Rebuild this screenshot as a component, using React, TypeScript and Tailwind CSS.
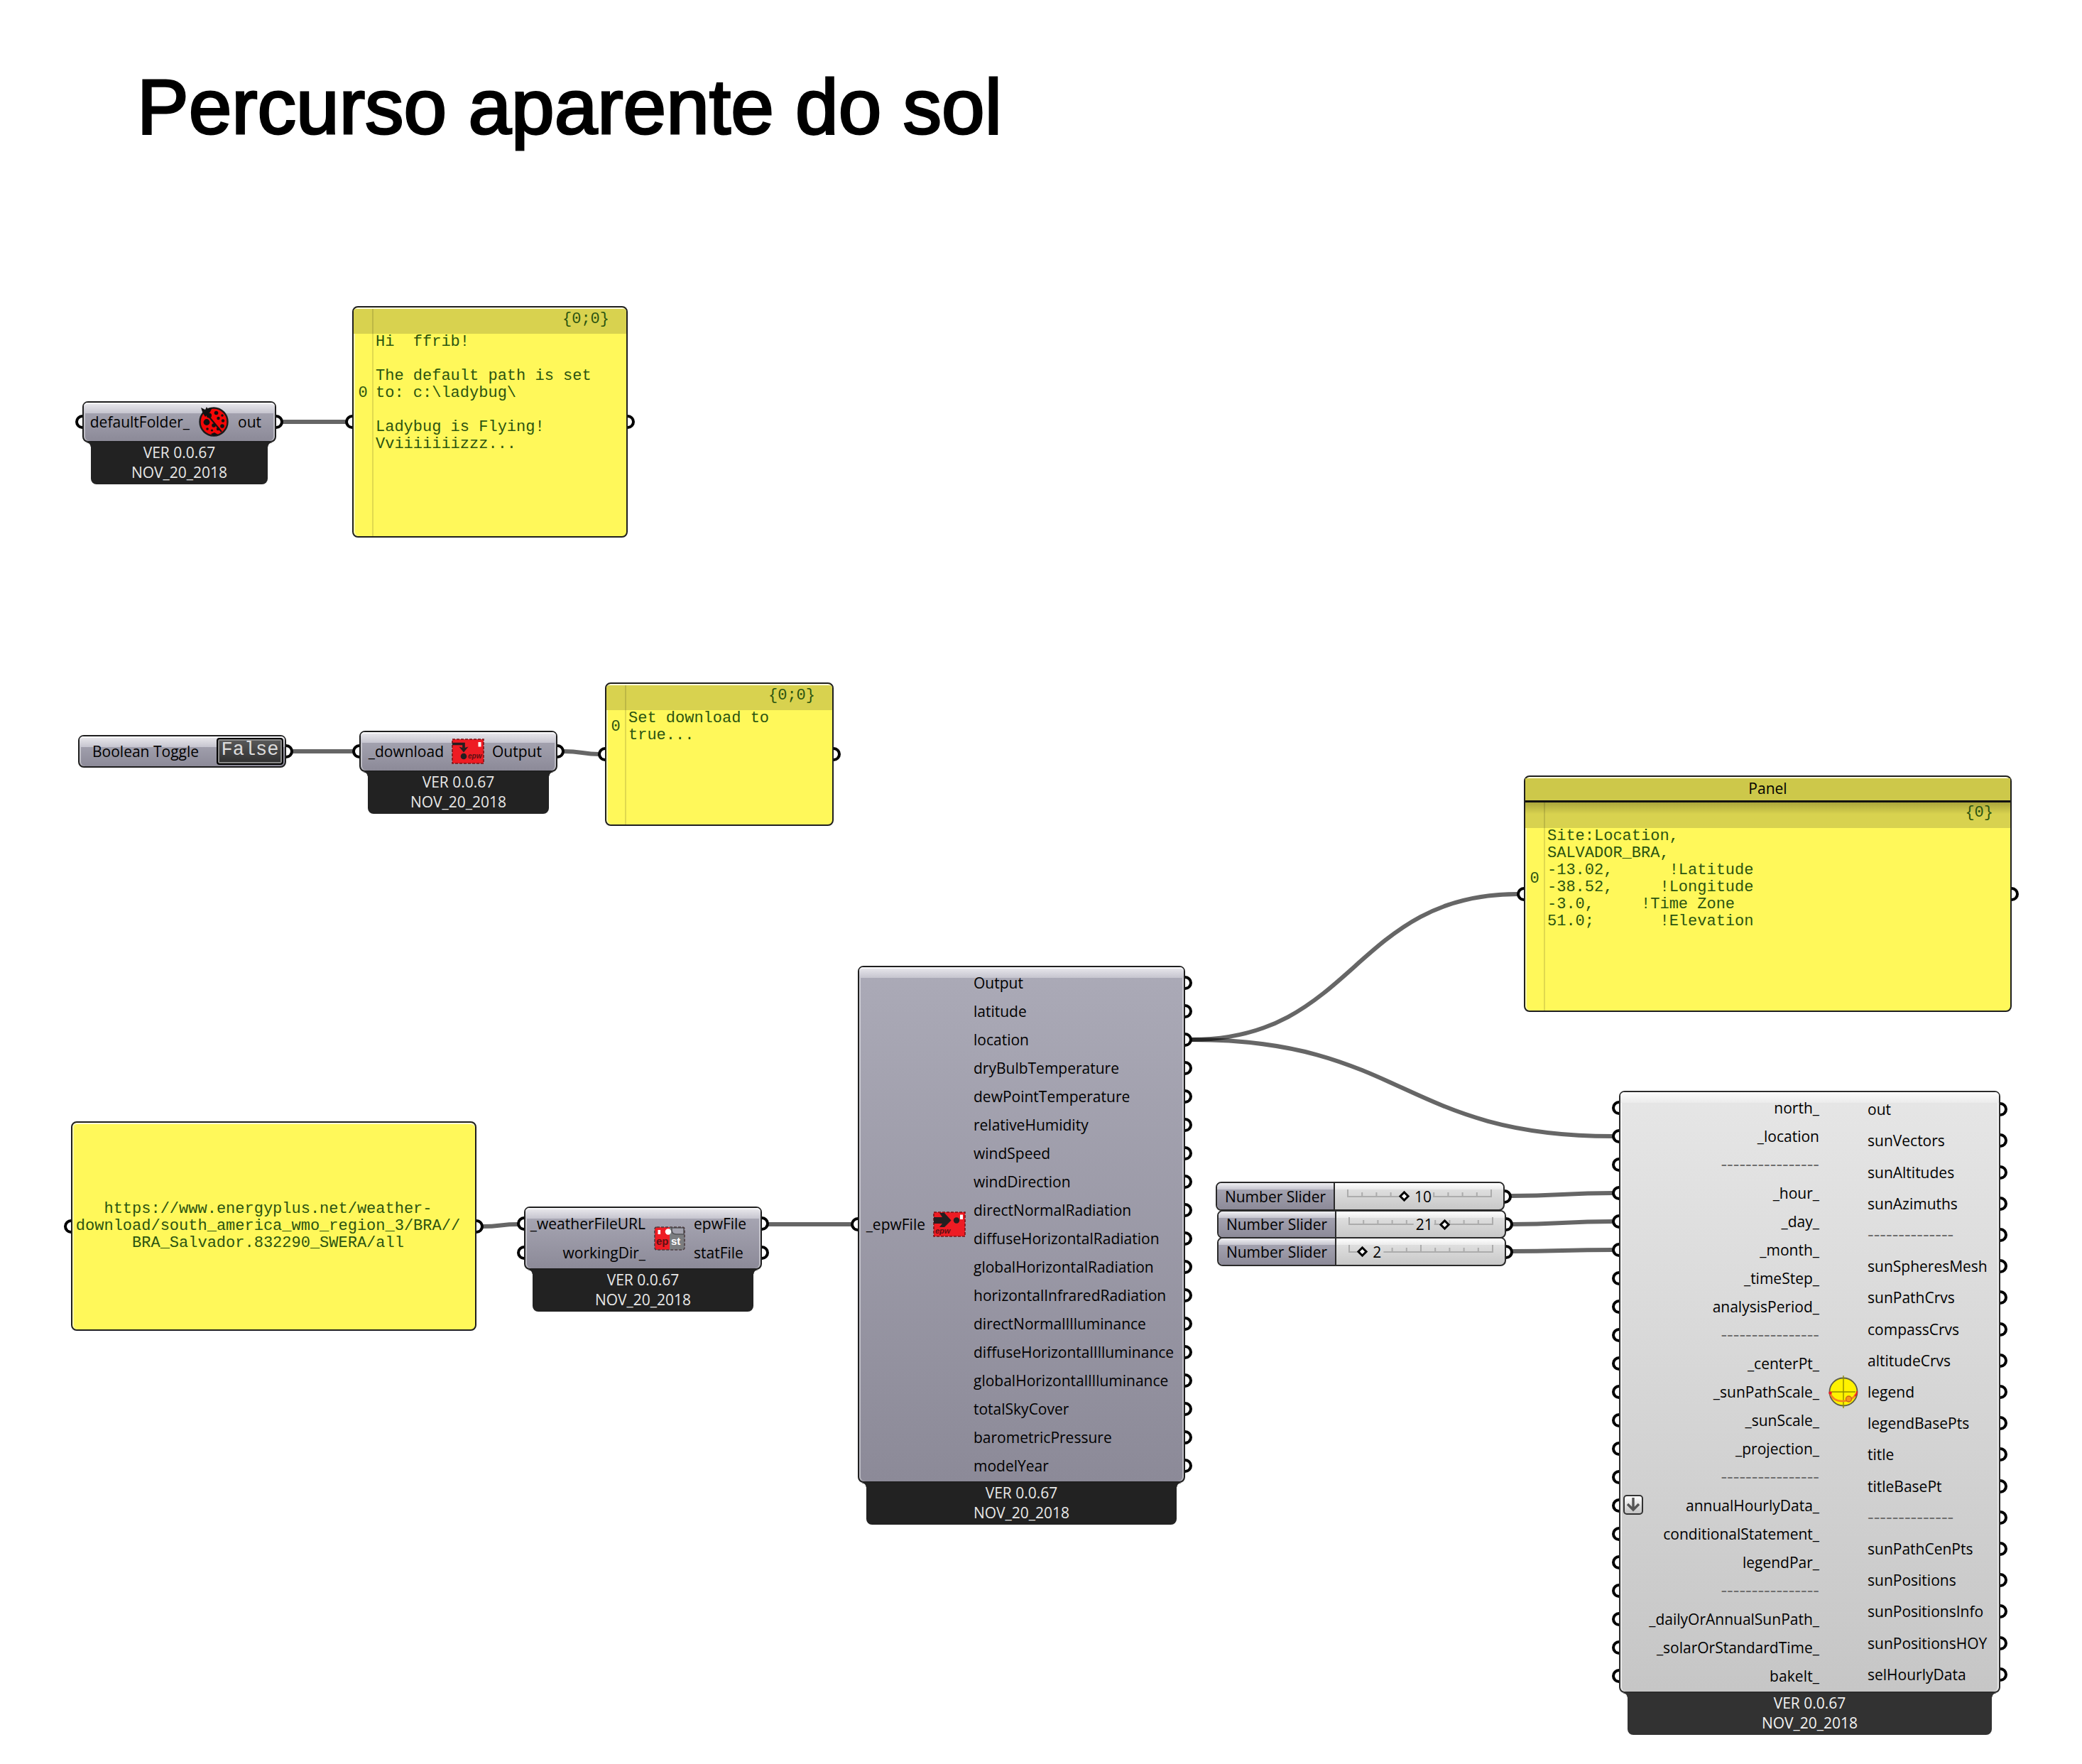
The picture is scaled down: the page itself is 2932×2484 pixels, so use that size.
import React from "react";

type Side = "left" | "right";
type Tone = "steel" | "light";

const DASH_IN = "----------------";
const DASH_OUT = "--------------";

const epwOutputs = [
  "Output",
  "latitude",
  "location",
  "dryBulbTemperature",
  "dewPointTemperature",
  "relativeHumidity",
  "windSpeed",
  "windDirection",
  "directNormalRadiation",
  "diffuseHorizontalRadiation",
  "globalHorizontalRadiation",
  "horizontalInfraredRadiation",
  "directNormalIlluminance",
  "diffuseHorizontalIlluminance",
  "globalHorizontalIlluminance",
  "totalSkyCover",
  "barometricPressure",
  "modelYear",
];

const sunInputs = [
  "north_",
  "_location",
  DASH_IN,
  "_hour_",
  "_day_",
  "_month_",
  "_timeStep_",
  "analysisPeriod_",
  DASH_IN,
  "_centerPt_",
  "_sunPathScale_",
  "_sunScale_",
  "_projection_",
  DASH_IN,
  "annualHourlyData_",
  "conditionalStatement_",
  "legendPar_",
  DASH_IN,
  "_dailyOrAnnualSunPath_",
  "_solarOrStandardTime_",
  "bakeIt_",
];

const sunOutputs = [
  "out",
  "sunVectors",
  "sunAltitudes",
  "sunAzimuths",
  DASH_OUT,
  "sunSpheresMesh",
  "sunPathCrvs",
  "compassCrvs",
  "altitudeCrvs",
  "legend",
  "legendBasePts",
  "title",
  "titleBasePt",
  DASH_OUT,
  "sunPathCenPts",
  "sunPositions",
  "sunPositionsInfo",
  "sunPositionsHOY",
  "selHourlyData",
];

/* Half-round grip on a node's edge, where wires attach. */
function Port({ side }: { side: Side }) {
  return (
    <span
      aria-hidden="true"
      className={
        side === "left"
          ? "absolute top-1/2 right-full mr-[2px] h-[20px] w-[10px] -translate-y-1/2 rounded-l-full border-[4px] border-r-0 border-black bg-white"
          : "absolute top-1/2 left-full ml-[2px] h-[20px] w-[10px] -translate-y-1/2 rounded-r-full border-[4px] border-l-0 border-black bg-white"
      }
    />
  );
}

function PortRow({ label, side, children }: { label: string; side: Side; children?: React.ReactNode }) {
  const dashed = label.startsWith("---");
  return (
    <li
      className={
        side === "left"
          ? "relative flex flex-1 items-center justify-end"
          : "relative flex flex-1 items-center"
      }
    >
      <Port side={side} />
      {children}
      <span
        className={
          dashed
            ? "font-['DejaVu_Sans',sans-serif] text-2xl leading-6 whitespace-nowrap text-[#6e6e6e]"
            : "leading-7 whitespace-nowrap"
        }
      >
        {label}
      </span>
    </li>
  );
}

function Version({ tone }: { tone: Tone }) {
  return (
    <div
      className={
        tone === "steel"
          ? "relative mx-3 h-[59px] rounded-b-lg bg-[#222222] text-center leading-7 text-[#e8e8e8]"
          : "relative mx-3 h-[59px] rounded-b-lg bg-[#323232] text-center leading-7 text-[#f2f2f2]"
      }
    >
      <span
        className={
          tone === "steel"
            ? "absolute top-0 right-full size-[6px] bg-[radial-gradient(circle_at_0_100%,transparent_5px,#222222_6px)]"
            : "absolute top-0 right-full size-[6px] bg-[radial-gradient(circle_at_0_100%,transparent_5px,#323232_6px)]"
        }
      />
      <span
        className={
          tone === "steel"
            ? "absolute top-0 left-full size-[6px] bg-[radial-gradient(circle_at_100%_100%,transparent_5px,#222222_6px)]"
            : "absolute top-0 left-full size-[6px] bg-[radial-gradient(circle_at_100%_100%,transparent_5px,#323232_6px)]"
        }
      />
      <p>VER 0.0.67</p>
      <p>NOV_20_2018</p>
    </div>
  );
}

function Gloss({ tone }: { tone: Tone }) {
  return (
    <span
      aria-hidden="true"
      className={
        tone === "steel"
          ? "absolute inset-x-0 top-0 h-[15px] rounded-t-[5px] border-t-2 border-[#f8f8fa] bg-linear-to-b from-[#e6e5ea] to-[#c6c5cf]"
          : "absolute inset-x-0 top-0 h-[15px] rounded-t-[5px] border-t-2 border-white bg-linear-to-b from-[#fafafa] to-[#ebebeb]"
      }
    />
  );
}

interface NodeProps {
  place: string;
  body: string;
  outputWidth: string;
  tone?: Tone;
  inputs: string[];
  outputs: string[];
  icon: React.ReactNode;
  expandAt?: string;
}

function ComponentNode({ place, body, outputWidth, tone = "steel", inputs, outputs, icon, expandAt }: NodeProps) {
  return (
    <section className={`absolute ${place}`}>
      <div
        className={
          (tone === "steel"
            ? "relative flex rounded-lg border-2 border-[#1f1f1f] bg-linear-to-b from-[#abaab7] to-[#8c8a98] py-[2px] shadow-[inset_2px_0_0_#ffffff66,inset_-2px_0_0_#ffffff66] "
            : "relative flex rounded-lg border-2 border-[#2c2c2c] bg-linear-to-b from-[#e6e6e6] to-[#c6c6c6] py-[2px] shadow-[inset_2px_0_0_#ffffff99,inset_-2px_0_0_#ffffff99] ") + body
        }
      >
        <Gloss tone={tone} />
        <ul className="relative flex min-w-0 flex-1 flex-col">
          {inputs.map((label, i) => (
            <PortRow key={i} label={label} side="left">
              {expandAt === label && (
                <button
                  type="button"
                  aria-label="Expand inputs"
                  className="absolute left-1 flex size-[28px] -translate-y-px items-center justify-center rounded-[5px] border-2 border-[#333333] bg-linear-to-b from-white to-[#c4c4c4]"
                >
                  <svg viewBox="0 0 20 20" className="size-5" fill="none">
                    <path d="M10 0v16M2 9l8 8 8-8" stroke="#555555" strokeWidth="3.4" />
                  </svg>
                </button>
              )}
            </PortRow>
          ))}
        </ul>
        <div className="relative flex w-[68px] shrink-0 items-center justify-center">{icon}</div>
        <ul className={`relative flex shrink-0 flex-col ${outputWidth}`}>
          {outputs.map((label, i) => (
            <PortRow key={i} label={label} side="right" />
          ))}
        </ul>
      </div>
      <Version tone={tone} />
    </section>
  );
}

interface PanelProps {
  place: string;
  title?: string;
  path: string;
  text: string;
}

function DataPanel({ place, title, path, text }: PanelProps) {
  return (
    <section
      className={`absolute flex flex-col rounded-lg border-2 border-[#1f1f1f] bg-[#fff85a] font-['Courier_New','Liberation_Mono',monospace] text-[22px] leading-6 text-[#2b5410] shadow-[inset_0_2px_0_#fffce0,inset_2px_0_0_#fffcb0] ${place}`}
    >
      <Port side="left" />
      <Port side="right" />
      {title && (
        <h2 className="mt-[2px] h-[34px] border-b-[3px] border-[#111111] bg-[#cdc84a] text-center font-['Open_Sans','Noto_Sans',sans-serif] text-[21px] leading-7 text-black">
          {title}
        </h2>
      )}
      <div
        className={
          title
            ? "flex h-[36px] justify-end bg-linear-to-b from-[#aba63c] to-[#d8d24f] to-45% pt-[3px] pr-6"
            : "mt-[2px] flex h-[35px] justify-end rounded-t-[4px] bg-[#d8d24f] pt-[3px] pr-6"
        }
      >
        {path}
      </div>
      <div className="flex flex-1 items-start">
        <div className="flex">
          <span className="flex w-[26px] items-center justify-center">0</span>
          <pre className="pl-[5px] font-[inherit]">{text}</pre>
        </div>
      </div>
      <span
        aria-hidden="true"
        className={
          title
            ? "absolute top-[36px] bottom-0 left-[26px] w-[2px] bg-black/12"
            : "absolute top-[2px] bottom-0 left-[26px] w-[2px] bg-black/12"
        }
      />
    </section>
  );
}

interface SliderProps {
  place: string;
  id: string;
  min: number;
  max: number;
  value: number;
  labelSide: Side;
}

function NumberSlider({ place, id, min, max, value, labelSide }: SliderProps) {
  const at = 5 + ((value - min) / (max - min)) * 202;
  const gapStart = labelSide === "right" ? at + 6 : at - 44;
  const gapEnd = labelSide === "right" ? at + (value > 9 ? 41 : 30) : at - 15;
  return (
    <div
      className={`absolute flex w-[407px] rounded-lg border-2 border-[#2a2a2a] bg-linear-to-b from-[#e6e6e6] to-[#c8c8c8] ${place}`}
    >
      <Port side="right" />
      <label
        htmlFor={id}
        className="relative flex w-[166px] items-center justify-center rounded-l-[6px] border-r-2 border-[#2a2a2a] bg-linear-to-b from-[#abaab7] to-[#8c8a98]"
      >
        <span className="absolute inset-x-0 top-0 h-[9px] rounded-tl-[6px] bg-linear-to-b from-[#f0f0f3] to-[#c6c5cf]" />
        <span className="relative leading-7">Number Slider</span>
      </label>
      <div className="relative flex flex-1 items-center pl-[13px]">
        <span className="absolute inset-x-0 top-0 h-[9px] rounded-tr-[6px] bg-linear-to-b from-white to-[#ebebeb]" />
        <div className="relative flex h-5 w-[212px] items-center">
          <svg
            aria-hidden="true"
            className="absolute inset-0 h-5 w-[212px]"
            viewBox="0 0 212 20"
            stroke="#acacac"
            strokeWidth="2"
          >
            <path d={`M4 10H${gapStart}M${gapEnd} 10H208`} />
            {Array.from({ length: 11 }, (_, i) => {
              const x = 5 + i * 20.2;
              if (x > gapStart && x < gapEnd) return null;
              return <path key={i} d={`M${x} 10V${i % 5 === 0 ? 0 : 4}`} />;
            })}
          </svg>
          <input
            id={id}
            type="range"
            min={min}
            max={max}
            defaultValue={value}
            className="relative h-5 w-[212px] appearance-none bg-transparent [&::-webkit-slider-thumb]:size-[11px] [&::-webkit-slider-thumb]:rotate-45 [&::-webkit-slider-thumb]:appearance-none [&::-webkit-slider-thumb]:border-[3px] [&::-webkit-slider-thumb]:border-black [&::-webkit-slider-thumb]:bg-white"
          />
          <output
            htmlFor={id}
            className={
              labelSide === "right"
                ? "absolute leading-7"
                : "absolute leading-7 -translate-x-full"
            }
            style={{ left: labelSide === "right" ? at + 15 : at - 17 }}
          >
            {value}
          </output>
        </div>
      </div>
    </div>
  );
}

function LadybugIcon() {
  return (
    <svg viewBox="0 0 42 44" className="h-[44px] w-[42px]" aria-hidden="true">
      <path d="M3 2l6 3 2-4 3 5-7 8z" fill="#111" />
      <circle cx="21" cy="22" r="19.5" fill="#f40606" stroke="#1a1a1a" strokeWidth="2.4" />
      <path d="M6 10c3-5 8-8 13-8l-3 6-7 7z" fill="#111" />
      <path d="M12 12l20 24" stroke="#111" strokeWidth="2" />
      <circle cx="14.500" cy="13" r="3.600" fill="#111" />
      <circle cx="11" cy="22.500" r="4.400" fill="#111" />
      <circle cx="24.500" cy="9.500" r="2.800" fill="#111" />
      <circle cx="27.500" cy="17" r="2.200" fill="#111" />
      <circle cx="33" cy="13" r="1.800" fill="#111" />
      <circle cx="34" cy="20.500" r="2.200" fill="#111" />
      <circle cx="21" cy="27" r="2.800" fill="#111" />
      <circle cx="33" cy="28" r="2.800" fill="#111" />
      <circle cx="12" cy="32" r="1.800" fill="#111" />
      <circle cx="18.500" cy="34" r="1.600" fill="#111" />
      <circle cx="27" cy="32" r="2.200" fill="#111" />
      <path d="M17 39l5-2 5 3-6 2z" fill="#111" />
    </svg>
  );
}

function DownloadIcon() {
  return (
    <svg viewBox="0 0 46 36" className="h-[36px] w-[46px]" aria-hidden="true">
      <rect x="1" y="1" width="44" height="34" fill="#ee1c24" stroke="#7d1216" strokeWidth="1.600" strokeDasharray="4 2" />
      <path d="M1 7.500h16v6" fill="none" stroke="#231f20" strokeWidth="3.600" />
      <path d="M10.500 11.500l6.500 2 6.500-2-6.500 8z" fill="#231f20" />
      <circle cx="17" cy="25" r="4.300" fill="#231f20" />
      <rect x="37.500" y="5" width="4" height="6.500" fill="#fff" />
      <text x="23" y="28" fontSize="10" fontWeight="700" fontStyle="italic" fontFamily="Liberation Sans, sans-serif" fill="#5c1013">
        epw
      </text>
    </svg>
  );
}

function EpwIcon() {
  return (
    <svg viewBox="0 0 46 36" className="h-[36px] w-[46px]" aria-hidden="true">
      <rect x="1" y="1" width="44" height="34" fill="#ee1c24" stroke="#7d1216" strokeWidth="1.600" strokeDasharray="4 2" />
      <path d="M1 8h12l-4-6h7l9.500 10.500L16 22H9l4-5H1z" fill="#231f20" />
      <circle cx="33" cy="12.500" r="4.200" fill="#231f20" />
      <rect x="38" y="4.500" width="4" height="6.500" fill="#fff" />
      <text x="3" y="31" fontSize="11" fontWeight="700" fontStyle="italic" fontFamily="Liberation Sans, sans-serif" fill="#5c1013">
        epw
      </text>
    </svg>
  );
}

function WeatherIcon() {
  return (
    <svg viewBox="0 0 44 34" className="h-[34px] w-[44px]" aria-hidden="true">
      <rect x="1" y="1" width="22" height="32" fill="#ee1c24" />
      <path d="M22 1h18q3 0 3 3v26q0 3-3 3H22z" fill="#7b7d80" />
      <path d="M25 2h17v9H31q-6 0-6-6z" fill="#a3a2ae" stroke="#55565a" strokeWidth="1.600" />
      <rect x="1" y="1" width="42" height="32" rx="3" fill="none" stroke="#4b3c40" strokeWidth="1.600" strokeDasharray="4 2" />
      <rect x="5.500" y="5" width="3.600" height="6" fill="#fff" />
      <circle cx="20" cy="7.500" r="4.200" fill="#fff" />
      <text x="3" y="26" fontSize="15" fontWeight="700" fontFamily="Liberation Sans, sans-serif" fill="#5c1013">
        ep
      </text>
      <text x="24" y="26" fontSize="15" fontWeight="700" fontFamily="Liberation Sans, sans-serif" fill="#fff">
        st
      </text>
    </svg>
  );
}

function SunPathIcon() {
  return (
    <svg viewBox="0 0 44 46" className="h-[46px] w-[44px]" aria-hidden="true">
      <circle cx="22" cy="23" r="19.500" fill="#fff200" stroke="#5f5f45" strokeWidth="1.800" />
      <path d="M22 0v46M5 23h34" stroke="#8f8d00" strokeWidth="1.400" />
      <path d="M3 24q4 12 17 12 15 0 20-11" fill="none" stroke="#f58220" strokeWidth="2.400" />
      <circle cx="29.500" cy="33" r="4" fill="#f7941d" stroke="#c8661a" strokeWidth="1.400" />
      <circle cx="3.500" cy="24.500" r="2.200" fill="#ee1c24" />
      <path d="M41 22q0 5-3 7" fill="none" stroke="#ee1c24" strokeWidth="1.800" />
    </svg>
  );
}

const wires = [
  "M398 594H487",
  "M412 1058H497",
  "M794 1058C820 1058 820 1062 844 1062",
  "M680 1727C705 1727 705 1724 729 1724",
  "M1081 1724H1199",
  "M1678 1464C1907 1464 1907 1259 2137 1259",
  "M1678 1464C1975 1464 1975 1600 2271 1600",
  "M2128 1684C2200 1684 2200 1680 2271 1680",
  "M2129 1724C2200 1724 2200 1720 2271 1720",
  "M2129 1762C2200 1762 2200 1760 2271 1760",
];

export default function App() {
  return (
    <main className="relative min-h-screen w-full overflow-hidden bg-white font-['Open_Sans','Noto_Sans',sans-serif] text-[21px] text-black">
      <h1 className="pt-[88px] pl-[193px] font-['Liberation_Sans',Arial,sans-serif] text-[109px] leading-[124px] [-webkit-text-stroke:3px_black]">
        Percurso aparente do sol
      </h1>

      <svg
        aria-hidden="true"
        className="absolute top-0 left-0 size-1 overflow-visible"
        fill="none"
        stroke="#000000"
        strokeOpacity="0.6"
        strokeWidth="6"
      >
        {wires.map((d) => (
          <path key={d} d={d} />
        ))}
      </svg>

      <ComponentNode
        place="left-[116px] top-[565px] w-[273px]"
        body="h-[58px]"
        outputWidth="w-[52px]"
        inputs={["defaultFolder_"]}
        outputs={["out"]}
        icon={<LadybugIcon />}
      />
      <DataPanel
        place="left-[496px] top-[431px] h-[326px] w-[388px]"
        path="{0;0}"
        text={"Hi  ffrib!\n\nThe default path is set\nto: c:\\ladybug\\\n\nLadybug is Flying!\nVviiiiiiizzz..."}
      />

      <div className="absolute top-[1035px] left-[110px] flex h-[46px] w-[293px] items-center rounded-lg border-2 border-[#1f1f1f] bg-linear-to-b from-[#abaab7] to-[#8c8a98] shadow-[inset_2px_0_0_#ffffff66]">
        <Gloss tone="steel" />
        <Port side="right" />
        <span id="toggle-label" className="relative flex-1 pl-[18px] leading-7">
          Boolean Toggle
        </span>
        <button
          type="button"
          aria-labelledby="toggle-label"
          aria-pressed="false"
          className="relative mr-[2px] h-[38px] w-[94px] rounded-[4px] border-2 border-black bg-linear-to-b from-[#5a5a5a] to-[#303030] pb-1 font-['Courier_New','Liberation_Mono',monospace] text-[27px] leading-7 text-[#dcdcdc] shadow-[inset_0_0_0_2px_#8a8a8a]"
        >
          False
        </button>
      </div>
      <ComponentNode
        place="left-[506px] top-[1029px] w-[279px]"
        body="h-[58px]"
        outputWidth="w-[90px]"
        inputs={["_download"]}
        outputs={["Output"]}
        icon={<DownloadIcon />}
      />
      <DataPanel
        place="left-[852px] top-[961px] h-[202px] w-[322px]"
        path="{0;0}"
        text={"Set download to\ntrue..."}
      />

      <section className="absolute top-[1579px] left-[100px] flex h-[295px] w-[571px] flex-col items-center justify-center rounded-lg border-2 border-[#1f1f1f] bg-[#fff85a] pr-4 font-['Courier_New','Liberation_Mono',monospace] text-[22px] leading-6 text-[#2b5410] shadow-[inset_0_2px_0_#fffce0,inset_2px_0_0_#fffcb0]">
        <Port side="left" />
        <Port side="right" />
        <p className="text-center">
          https://www.energyplus.net/weather-
          <br />
          download/south_america_wmo_region_3/BRA//
          <br />
          BRA_Salvador.832290_SWERA/all
        </p>
      </section>
      <ComponentNode
        place="left-[738px] top-[1699px] w-[335px]"
        body="h-[89px]"
        outputWidth="w-[94px]"
        inputs={["_weatherFileURL", "workingDir_"]}
        outputs={["epwFile", "statFile"]}
        icon={<WeatherIcon />}
      />
      <ComponentNode
        place="left-[1208px] top-[1360px] w-[461px]"
        body="h-[728px]"
        outputWidth="w-[296px]"
        inputs={["_epwFile"]}
        outputs={epwOutputs}
        icon={<EpwIcon />}
      />

      <DataPanel
        place="left-[2146px] top-[1092px] h-[333px] w-[687px]"
        title="Panel"
        path="{0}"
        text={
          "Site:Location,\nSALVADOR_BRA,\n-13.02,      !Latitude\n-38.52,     !Longitude\n-3.0,     !Time Zone\n51.0;       !Elevation"
        }
      />

      <NumberSlider place="left-[1712px] top-[1664px] h-[41px]" id="hour" min={1} max={24} value={10} labelSide="right" />
      <NumberSlider place="left-[1714px] top-[1704px] h-[40px]" id="day" min={1} max={31} value={21} labelSide="left" />
      <NumberSlider place="left-[1714px] top-[1742px] h-[41px]" id="month" min={1} max={12} value={2} labelSide="right" />

      <ComponentNode
        place="left-[2280px] top-[1536px] w-[537px]"
        body="h-[848px]"
        outputWidth="w-[185px]"
        tone="light"
        inputs={sunInputs}
        outputs={sunOutputs}
        icon={<SunPathIcon />}
        expandAt="annualHourlyData_"
      />
    </main>
  );
}
